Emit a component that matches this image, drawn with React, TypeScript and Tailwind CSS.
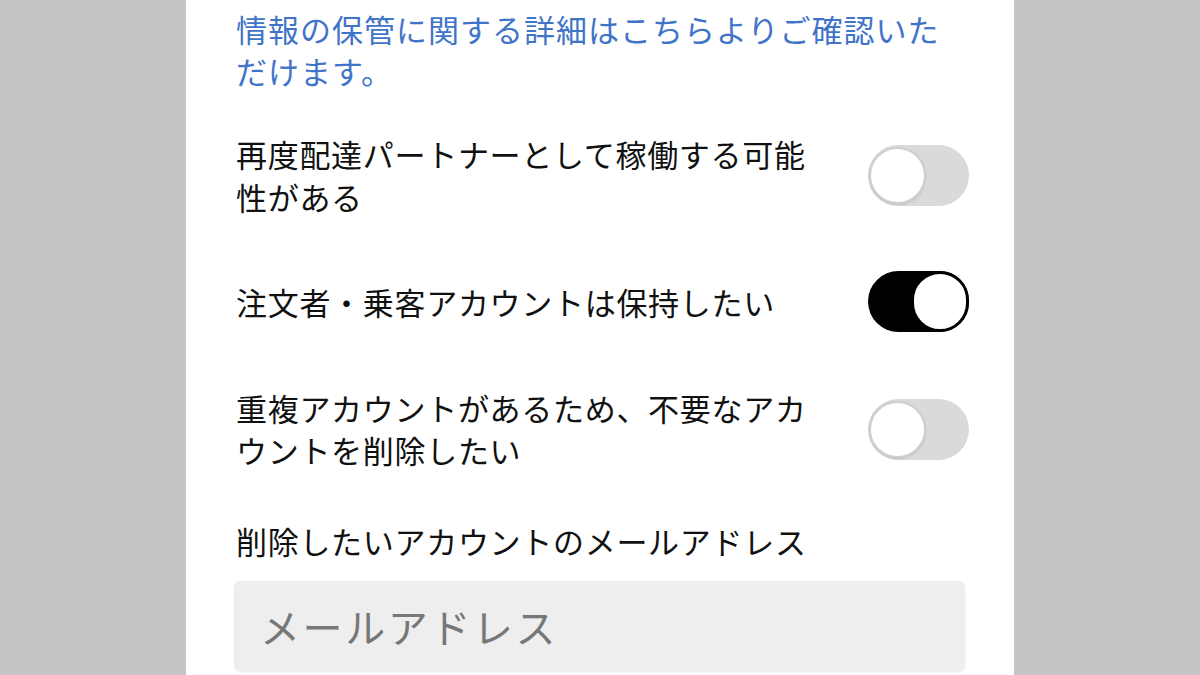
const font = { fontFamily: '"Noto Sans CJK JP", "Noto Sans", sans-serif' }

const Toggle = ({ on }: { on: boolean }) => (
  <div
    className={`relative h-[61px] w-[101px] shrink-0 rounded-full ${
      on ? 'bg-black' : 'bg-[#dadadc]'
    }`}
  >
    {on ? (
      <div className="absolute right-0 top-0 h-[61px] w-[58px] rounded-full border-[3px] border-black bg-white" />
    ) : (
      <div className="absolute left-[1px] top-[2px] h-[57px] w-[57px] rounded-full border-2 border-[#cfcfcf] bg-white shadow-[0_1px_2px_rgba(0,0,0,0.12)]" />
    )}
  </div>
)

export default function App() {
  return (
    <div className="flex h-[675px] w-full justify-center overflow-hidden bg-[#c5c5c5]" style={font}>
      <div className="flex h-[675px] w-[828px] flex-col bg-white pl-[50px] pr-[45px] text-[31px] tracking-[0.7px] text-[#111]">
        <p className="mt-[8px] whitespace-nowrap leading-[42px] tracking-[1px] text-[#3f74c9]">
          情報の保管に関する詳細はこちらよりご確認いた
          <br />
          だけます。
        </p>

        <div className="mt-[40px] flex items-center justify-between">
          <p className="whitespace-nowrap leading-[43px]">
            再度配達パートナーとして稼働する可能
            <br />
            性がある
          </p>
          <Toggle on={false} />
        </div>

        <div className="mt-[53px] flex items-center justify-between">
          <p className="whitespace-nowrap leading-[43px]">注文者・乗客アカウントは保持したい</p>
          <Toggle on />
        </div>

        <div className="mt-[55px] flex items-center justify-between">
          <p className="whitespace-nowrap leading-[42px]">
            重複アカウントがあるため、不要なアカ
            <br />
            ウントを削除したい
          </p>
          <Toggle on={false} />
        </div>

        <p className="mt-[49px] whitespace-nowrap leading-[42px]">削除したいアカウントのメールアドレス</p>

        <div className="-ml-[2px] mt-[19px] flex h-[89px] w-[731px] shrink-0 items-center rounded-[6px] bg-[#eeeeee] pl-[26px] shadow-[0_2px_2px_rgba(0,0,0,0.08)]">
          <input
            placeholder="メールアドレス"
            className="w-full bg-transparent text-[40px] tracking-[2.6px] text-[#333] outline-none placeholder:text-[#777]"
            style={font}
          />
        </div>
      </div>
    </div>
  )
}
